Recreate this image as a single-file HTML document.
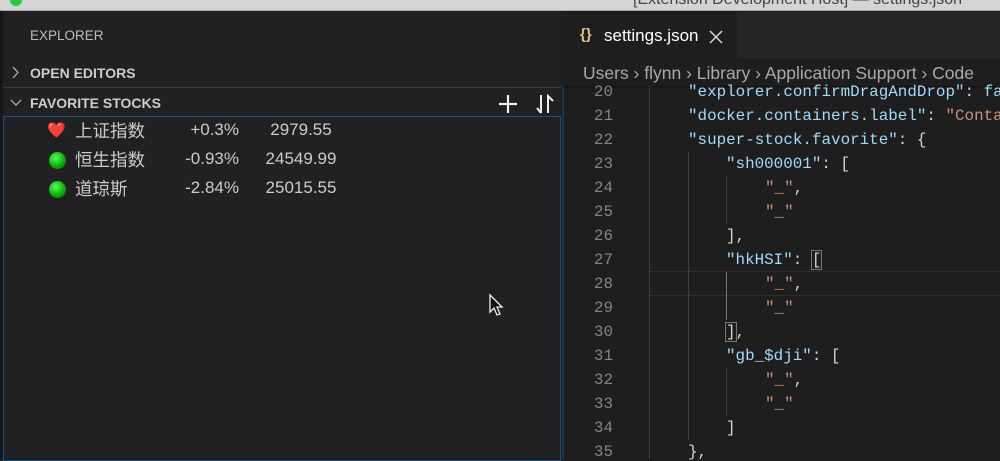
<!DOCTYPE html>
<html><head><meta charset="utf-8"><style>
*{margin:0;padding:0;box-sizing:border-box}
body{width:1000px;height:458px;overflow:hidden;background:#1e1e1e;position:relative;font-family:"Liberation Sans","Noto Sans CJK SC",sans-serif;color:#ccc}
.abs{position:absolute;white-space:nowrap}
#title{left:0;top:0;width:1000px;height:11px;background:#d5d4d5;border-bottom:1px solid #a8a8a8;overflow:hidden}
#side{left:0;top:11px;width:561px;height:447px;background:#212123;border-left:3px solid #161617}
.mono{font-family:"Liberation Mono",monospace;font-size:15.9px}
.ln{color:#858585;width:53px;text-align:right;left:560px}
.k{color:#9cdcfe}.s{color:#ce9178}.p{color:#d4d4d4}
.guide{position:absolute;width:1px;background:#404040}
.num{font-size:17px;color:#ccc}
.pc{width:80px;text-align:right}
.pr{width:100px;text-align:center}
</style></head><body>
<div class="abs" id="title"><div class="abs" style="left:10px;top:-6px;width:12px;height:12px;border-radius:6px;background:#2cc63a"></div><div class="abs" style="left:633px;top:-9px;font-size:16px;color:#444">[Extension Development Host] — settings.json</div></div>
<div class="abs" id="side">
 <div class="abs" style="left:27px;top:17px;font-size:13.5px;color:#bbb">EXPLORER</div>
 <svg class="abs" style="left:9px;top:55px" width="8" height="13"><path d="M1 1 L6 6.5 L1 12" stroke="#bbb" fill="none" stroke-width="1.2"/></svg>
 <div class="abs" style="left:27px;top:54px;font-size:14px;font-weight:bold;color:#ccc">OPEN EDITORS</div>
 <div class="abs" style="left:0;top:76px;width:558px;height:1px;background:#3a3a3c"></div>
 <svg class="abs" style="left:7px;top:88px" width="12" height="8"><path d="M1 1 L6 6 L11 1" stroke="#bbb" fill="none" stroke-width="1.2"/></svg>
 <div class="abs" style="left:27px;top:84px;font-size:14px;font-weight:bold;color:#ccc">FAVORITE STOCKS</div>
 <svg class="abs" style="left:494px;top:82px" width="22" height="22"><path d="M11 2V20M2 11H20" stroke="#eee" stroke-width="2.2"/></svg>
 <svg class="abs" style="left:530px;top:82px" width="24" height="22"><path d="M8 2V20M4 15L8 20M15 20V3L20 8" stroke="#eee" stroke-width="2" fill="none"/></svg>
 <div class="abs" style="left:0;top:105px;width:558px;height:345px;border:1px solid #0e5583"></div>
 <div class="abs" style="left:44px;top:110px;font-size:15px;color:#e53935">❤️</div>
 <div class="abs" style="left:46px;top:141px;width:17px;height:17px;border-radius:9px;background:radial-gradient(circle at 40% 35%,#5f5,#0a0 60%,#070)"></div>
 <div class="abs" style="left:46px;top:170px;width:17px;height:17px;border-radius:9px;background:radial-gradient(circle at 40% 35%,#5f5,#0a0 60%,#070)"></div>
 <div class="abs" style="left:72px;top:107px;font-size:17.5px;color:#ccc">上证指数</div>
 <div class="abs" style="left:72px;top:136px;font-size:17.5px;color:#ccc">恒生指数</div>
 <div class="abs" style="left:72px;top:165px;font-size:17.5px;color:#ccc">道琼斯</div>
 <div class="abs num pc" style="left:156px;top:109px">+0.3%</div>
 <div class="abs num pc" style="left:156px;top:138px">-0.93%</div>
 <div class="abs num pc" style="left:156px;top:167px">-2.84%</div>
 <div class="abs num pr" style="left:248px;top:109px">2979.55</div>
 <div class="abs num pr" style="left:248px;top:138px">24549.99</div>
 <div class="abs num pr" style="left:248px;top:167px">25015.55</div>
 <svg class="abs" style="left:484px;top:282px" width="20" height="26"><path d="M3 2V19L7 15L10 22L13 21L10 14H15Z" fill="#111" stroke="#eee" stroke-width="1.3"/></svg>
</div>
<div class="abs" style="left:561px;top:12px;width:439px;height:46px;background:#252526"></div>
<div class="abs" style="left:561px;top:12px;width:176px;height:46px;background:#1e1e1e"></div>
<div class="abs" style="left:580px;top:26px;font-size:15px;color:#e2c08d;font-weight:bold">{}</div>
<div class="abs" style="left:604px;top:26px;font-size:17px;color:#fff">settings.json</div>
<svg class="abs" style="left:709px;top:30px" width="14" height="14"><path d="M1 1L13 13M13 1L1 13" stroke="#ddd" stroke-width="1.4"/></svg>
<div class="abs" style="left:583px;top:63px;font-size:17.5px;color:#aaa">Users › flynn › Library › Application Support › Code</div>
<div class="abs" style="left:561px;top:86px;width:439px;height:3px;background:linear-gradient(#111,#1e1e1e)"></div>
<div class="abs" style="left:650px;top:271px;width:350px;height:25px;border-top:1px solid #2e2e2e;border-bottom:1px solid #2e2e2e"></div>
<div class="guide" style="left:649px;top:86px;height:372px"></div>
<div class="guide" style="left:688px;top:152px;height:288px"></div>
<div class="guide" style="left:726px;top:176px;height:48px"></div>
<div class="guide" style="left:726px;top:272px;height:48px;background:#777"></div>
<div class="guide" style="left:726px;top:368px;height:48px"></div>
<div class="abs" style="left:562px;top:86px;width:2px;height:372px;background:#17384f"></div>
<div class="mono">
<div class="abs ln" style="top:83px">20</div><div class="abs ln" style="top:107px">21</div><div class="abs ln" style="top:131px">22</div><div class="abs ln" style="top:155px">23</div><div class="abs ln" style="top:179px">24</div><div class="abs ln" style="top:203px">25</div><div class="abs ln" style="top:227px">26</div><div class="abs ln" style="top:251px">27</div><div class="abs ln" style="top:275px">28</div><div class="abs ln" style="top:299px">29</div><div class="abs ln" style="top:323px">30</div><div class="abs ln" style="top:347px">31</div><div class="abs ln" style="top:371px">32</div><div class="abs ln" style="top:395px">33</div><div class="abs ln" style="top:419px">34</div><div class="abs ln" style="top:443px">35</div>
<div class="abs" style="left:688px;top:83px"><span class="k">"explorer.confirmDragAndDrop"</span><span class="p">: </span><span class="k">fa</span></div>
<div class="abs" style="left:688px;top:107px"><span class="k">"docker.containers.label"</span><span class="p">: </span><span class="s">"Conta</span></div>
<div class="abs" style="left:688px;top:131px"><span class="k">"super-stock.favorite"</span><span class="p">: {</span></div>
<div class="abs" style="left:726px;top:155px"><span class="k">"sh000001"</span><span class="p">: [</span></div>
<div class="abs" style="left:765px;top:179px"><span class="s">"_"</span><span class="p">,</span></div>
<div class="abs" style="left:765px;top:203px"><span class="s">"_"</span></div>
<div class="abs p" style="left:726px;top:227px">],</div>
<div class="abs" style="left:726px;top:251px"><span class="k">"hkHSI"</span><span class="p">: <span style="outline:1px solid #777">[</span></span></div>
<div class="abs" style="left:765px;top:275px"><span class="s">"_"</span><span class="p">,</span></div>
<div class="abs" style="left:765px;top:299px"><span class="s">"_"</span></div>
<div class="abs p" style="left:726px;top:323px"><span style="outline:1px solid #777">]</span>,</div>
<div class="abs" style="left:726px;top:347px"><span class="k">"gb_$dji"</span><span class="p">: [</span></div>
<div class="abs" style="left:765px;top:371px"><span class="s">"_"</span><span class="p">,</span></div>
<div class="abs" style="left:765px;top:395px"><span class="s">"_"</span></div>
<div class="abs p" style="left:726px;top:419px">]</div>
<div class="abs p" style="left:688px;top:443px">},</div>
</div>
</body></html>
